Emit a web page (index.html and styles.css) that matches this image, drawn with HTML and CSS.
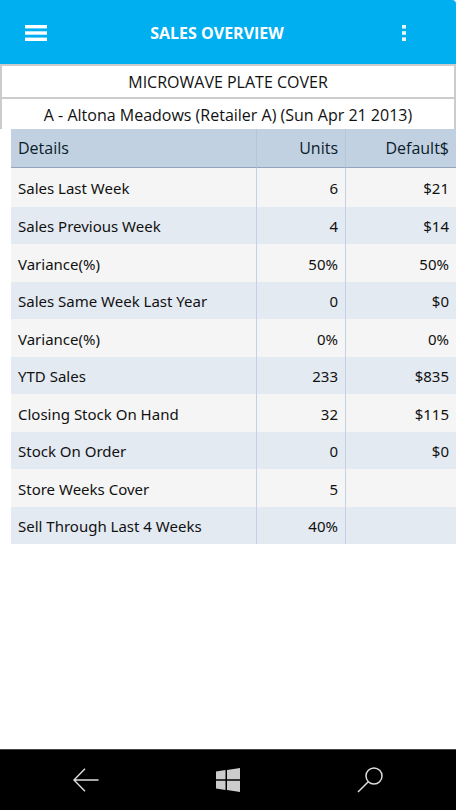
FILE: index.html
```html
<!DOCTYPE html>
<html lang="en">
<head>
  <meta charset="UTF-8" />
  <meta name="viewport" content="width=device-width, initial-scale=1.0" />
  <title>Sales Overview</title>
  <link rel="stylesheet" href="styles.css">
</head>
<body>
  <header class="topbar">
    <button class="icon-btn" aria-label="Menu">
      <svg width="22" height="16" viewBox="0 0 22 16" fill="#fff">
        <rect width="22" height="3.4" />
        <rect y="6.3" width="22" height="3.4" />
        <rect y="12.6" width="22" height="3.4" />
      </svg>
    </button>
    <h1>SALES OVERVIEW</h1>
    <button class="icon-btn more-btn" aria-label="More">
      <svg width="4" height="16" viewBox="0 0 4 16" fill="#e8f8ff">
        <rect width="4" height="3.6" />
        <rect y="6.2" width="4" height="3.6" />
        <rect y="12.4" width="4" height="3.6" />
      </svg>
    </button>
  </header>

  <main>
    <div class="info">
      <p>MICROWAVE PLATE COVER</p>
      <p>A - Altona Meadows (Retailer A) (Sun Apr 21 2013)</p>
    </div>
    <div class="table-wrap">
      <table>
        <thead>
          <tr><th class="name">Details</th><th class="units">Units</th><th class="value">Default$</th></tr>
        </thead>
        <tbody>
          <tr><td>Sales Last Week</td><td>6</td><td>$21</td></tr>
          <tr><td>Sales Previous Week</td><td>4</td><td>$14</td></tr>
          <tr><td>Variance(%)</td><td>50%</td><td>50%</td></tr>
          <tr><td>Sales Same Week Last Year</td><td>0</td><td>$0</td></tr>
          <tr><td>Variance(%)</td><td>0%</td><td>0%</td></tr>
          <tr><td>YTD Sales</td><td>233</td><td>$835</td></tr>
          <tr><td>Closing Stock On Hand</td><td>32</td><td>$115</td></tr>
          <tr><td>Stock On Order</td><td>0</td><td>$0</td></tr>
          <tr><td>Store Weeks Cover</td><td>5</td><td></td></tr>
          <tr><td>Sell Through Last 4 Weeks</td><td>40%</td><td></td></tr>
        </tbody>
      </table>
    </div>
  </main>

  <nav class="navbar">
    <button class="icon-btn" aria-label="Back">
      <svg width="26" height="24" viewBox="0 0 26 24" fill="none" stroke="#ddd" stroke-width="1.4">
        <path d="M25.5 12H1M12 0.8L1 12l11 11.2" />
      </svg>
    </button>
    <button class="icon-btn" aria-label="Start">
      <svg width="24" height="24" viewBox="0 0 24 24" fill="#ccc">
        <path d="M0 3.4l9.5-1.3v9.2H0zM11 1.9L24 0v11.3H11zM0 12.8h9.5v9.2L0 20.6zM11 12.8h13V24l-13-1.9z" />
      </svg>
    </button>
    <button class="icon-btn" aria-label="Search">
      <svg width="26" height="26" viewBox="0 0 26 26" fill="none" stroke="#ddd" stroke-width="1.5">
        <circle cx="17" cy="9" r="8" />
        <path d="M11.3 14.7L1 25" />
      </svg>
    </button>
  </nav>
</body>
</html>
```
FILE: styles.css
```css
* {
  box-sizing: border-box;
}
body {
  margin: 0;
  min-height: 100vh;
  display: flex;
  flex-direction: column;
  font-family: "Open Sans", "Noto Sans", sans-serif;
  font-size: 16px;
  line-height: 20px;
  color: #111;
  background: #fff;
}
.topbar {
  display: flex;
  align-items: center;
  height: 64px;
  padding: 2px 28px 0 12px;
  background: #00aff0;
  border-top-right-radius: 4px;
}
h1 {
  flex: 1;
  margin: 0;
  padding-right: 6px;
  font-size: 16px;
  font-weight: bold;
  text-align: center;
  color: #fff;
}
.icon-btn {
  display: flex;
  align-items: center;
  justify-content: center;
  width: 48px;
  height: 48px;
  padding: 0;
  border: none;
  background: none;
  cursor: pointer;
}
main {
  flex: 1;
}
.info {
  border-left: 2px solid #ccc;
  border-right: 2px solid #ccc;
}
.info p {
  margin: 0;
  padding: 6px 0 5px;
  border-top: 2px solid #ccc;
  text-align: center;
}
.info p:last-child {
  padding-bottom: 4px;
}
.table-wrap {
  padding-left: 11px;
}
table {
  width: 100%;
  border-collapse: separate;
  border-spacing: 0;
  table-layout: fixed;
}
th, td {
  height: 37px;
  padding: 0 7px;
  text-align: right;
  border-right: 1px solid #c5d0e6;
}
th:first-child, td:first-child {
  text-align: left;
}
th:last-child, td:last-child {
  border-right: none;
}
thead tr:nth-child(odd) th {
  height: 39px;
  font-weight: normal;
  color: #0b1c2a;
  background: #c1d1e2;
  border-right-color: #b3c6dc;
  border-bottom: 1px solid #93a5bd;
}
.units {
  width: 89px;
}
.value {
  width: 110px;
}
td {
  padding-top: 1px;
  font-family: "Noto Sans", "Open Sans", sans-serif;
  font-size: 15px;
  background: #f5f5f5;
}
tr:nth-child(odd) td {
  height: 38px;
}
tbody tr:first-child td {
  height: 39px;
}
tr:nth-child(even) td {
  background: #e4eaf2;
}
.navbar {
  display: flex;
  align-items: center;
  justify-content: space-between;
  height: 61px;
  padding: 0 62px;
  background: #000;
  border-top: 1px solid #444;
}
```
